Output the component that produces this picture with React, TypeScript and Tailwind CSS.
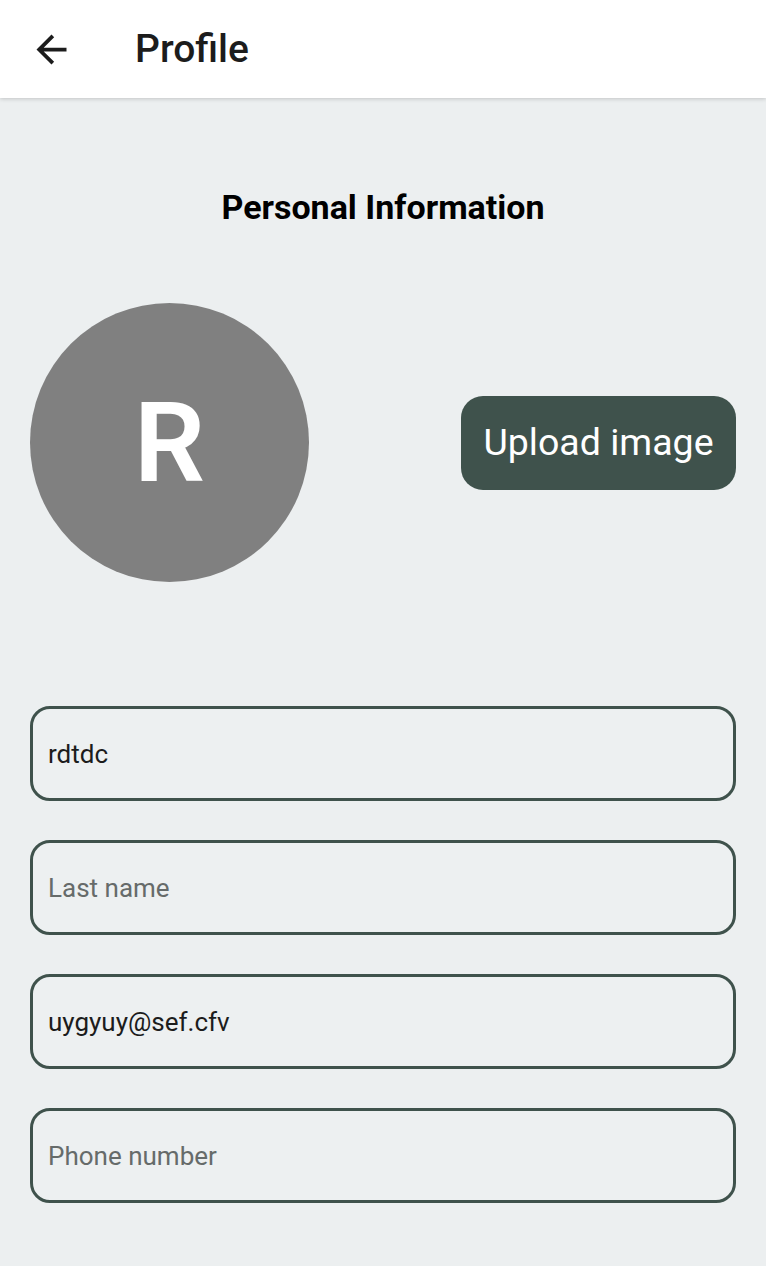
import React from 'react';

const fields = [
  { value: 'rdtdc', placeholder: 'First name' },
  { value: '', placeholder: 'Last name' },
  { value: 'uygyuy@sef.cfv', placeholder: 'Email' },
  { value: '', placeholder: 'Phone number' },
];

const App: React.FC = () => {
  return (
    <div className="min-h-[1266px] bg-[#eceff0] font-['Roboto',sans-serif]">
      {/* Top bar */}
      <header className="h-[98px] bg-white flex items-center shadow-[0_1px_4px_rgba(0,0,0,0.18)] relative z-10">
        <button className="w-[45px] h-[45px] ml-[29px] flex items-center justify-center text-[#1c1c1c]">
          <svg viewBox="0 0 24 24" width="45" height="45" fill="currentColor">
            <path d="M20 11H7.83l5.59-5.59L12 4l-8 8 8 8 1.41-1.41L7.83 13H20v-2z" />
          </svg>
        </button>
        <h1 className="ml-[61px] text-[39px] font-medium text-[#1c1c1c] leading-none">Profile</h1>
      </header>

      <main className="px-[30px]">
        <h2 className="pt-[89px] text-center text-[34px] font-bold text-black leading-[40px]">
          Personal Information
        </h2>

        {/* Avatar + upload */}
        <div className="mt-[76px] flex items-center justify-between">
          <div className="w-[279px] h-[279px] rounded-full bg-[#808080] flex items-center justify-center">
            <span className="text-white text-[112px] font-semibold leading-none">R</span>
          </div>
          <button className="h-[94px] w-[275px] rounded-[22px] bg-[#3f524c] text-white text-[37.5px] leading-none">
            Upload image
          </button>
        </div>

        {/* Form */}
        <div className="mt-[124px] flex flex-col gap-[39px]">
          {fields.map((f) => (
            <input
              key={f.placeholder}
              defaultValue={f.value}
              placeholder={f.placeholder}
              className="h-[95px] w-full rounded-[20px] border-[3px] border-[#3f524c] bg-[#edf0f1] px-[15px] text-[26px] text-[#1c1c1c] placeholder:text-[#666b6a] outline-none"
            />
          ))}
        </div>
      </main>
    </div>
  );
};

export default App;
